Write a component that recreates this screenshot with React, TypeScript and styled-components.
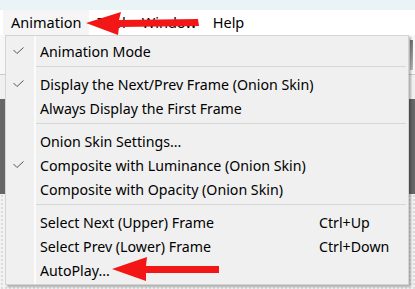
import styled, { createGlobalStyle } from 'styled-components';

const GlobalStyle = createGlobalStyle`
  html, body {
    margin: 0;
    padding: 0;
  }
  body {
    width: 415px;
    height: 289px;
    overflow: hidden;
    background: #f0f0f0;
    font-family: "Noto Sans", "Liberation Sans", sans-serif;
    color: #000;
  }
`;

const StyledWindow = styled.div`
  position: relative;
  width: 415px;
  height: 289px;
  display: flex;
  flex-direction: column;
  overflow: hidden;
`;

const StyledTitleStrip = styled.div`
  flex: none;
  height: 10px;
  background: #eaf3f5;
`;

const StyledMenuBar = styled.div`
  flex: none;
  height: 25px;
  display: flex;
  align-items: stretch;
  padding-left: 3px;
  background: #fff;
`;

const StyledBarItem = styled.div<{ $open?: boolean }>`
  display: flex;
  align-items: center;
  padding: 0 8px 1px;
  font-size: 14.5px;
  background: ${({ $open }) => ($open ? '#f5f5f5' : 'transparent')};
`;

const StyledWorkspace = styled.div`
  flex: 1;
  display: flex;
  flex-direction: column;
`;

const StyledToolbar = styled.div`
  flex: none;
  height: 40px;
  display: flex;
  justify-content: flex-end;
  align-items: flex-start;
  padding-top: 5px;
  box-sizing: border-box;
  background: #f7f7f7;
  border-bottom: 1px solid #c8c8c8;
`;

const StyledGrip = styled.div`
  width: 3px;
  height: 30px;
  margin-right: 2px;
  background: linear-gradient(#777, #bbb);
`;

const StyledGap = styled.div`
  flex: none;
  height: 24px;
  background: #f0f0f0;
`;

const StyledCanvas = styled.div`
  flex: none;
  height: 95px;
  background: #666;
`;

const StyledFloor = styled.div`
  flex: 1;
  background-color: #f2f2f2;
  background-image: radial-gradient(#dcdcdc 1px, transparent 1px);
  background-size: 4px 4px;
`;

const StyledMenu = styled.div`
  position: absolute;
  top: 35px;
  left: 5px;
  width: 404px;
  box-sizing: border-box;
  padding: 3px 2px 2px;
  border: 1px solid #d4d4d4;
  background: linear-gradient(
    to right,
    #f0f0f0 28px,
    #fbfbfb 28px,
    #fbfbfb 30px,
    #f0f0f0 30px
  );
  box-shadow: 2px 2px 2px rgba(0, 0, 0, 0.28);
  font-size: 14.2px;
`;

const StyledRow = styled.div`
  height: 24px;
  display: grid;
  grid-template-columns: 26px 1fr 87px;
  align-items: center;
  white-space: nowrap;
`;

const StyledCheck = styled.div`
  display: flex;
  align-items: center;
  padding: 0 0 2px 5px;
`;

const StyledLabel = styled.span`
  padding-left: 6px;
`;

const StyledSeparator = styled.div`
  height: 1px;
  margin: 3px 0 5px 28px;
  background: #d6d6d6;
`;

const StyledArrows = styled.svg`
  position: absolute;
  inset: 0;
  pointer-events: none;
`;

type Entry =
  | { kind: 'item'; label: string; checked?: boolean; shortcut?: string }
  | { kind: 'sep' };

const ENTRIES: Entry[] = [
  { kind: 'item', label: 'Animation Mode', checked: true },
  { kind: 'sep' },
  { kind: 'item', label: 'Display the Next/Prev Frame (Onion Skin)', checked: true },
  { kind: 'item', label: 'Always Display the First Frame' },
  { kind: 'sep' },
  { kind: 'item', label: 'Onion Skin Settings...' },
  { kind: 'item', label: 'Composite with Luminance (Onion Skin)', checked: true },
  { kind: 'item', label: 'Composite with Opacity (Onion Skin)' },
  { kind: 'sep' },
  { kind: 'item', label: 'Select Next (Upper) Frame', shortcut: 'Ctrl+Up' },
  { kind: 'item', label: 'Select Prev (Lower) Frame', shortcut: 'Ctrl+Down' },
  { kind: 'item', label: 'AutoPlay...' },
];

const CheckMark = () => (
  <svg width="11" height="7" viewBox="0 0 11 7">
    <polyline
      points="0.5,3 4,6.5 10.5,0.5"
      fill="none"
      stroke="#555"
      strokeWidth="1"
    />
  </svg>
);

export default function App() {
  return (
    <StyledWindow>
      <GlobalStyle />
      <StyledTitleStrip />
      <StyledMenuBar>
        <StyledBarItem $open>Animation</StyledBarItem>
        <StyledBarItem>Tool</StyledBarItem>
        <StyledBarItem>Window</StyledBarItem>
        <StyledBarItem>Help</StyledBarItem>
      </StyledMenuBar>
      <StyledWorkspace>
        <StyledToolbar>
          <StyledGrip />
        </StyledToolbar>
        <StyledGap />
        <StyledCanvas />
        <StyledFloor />
      </StyledWorkspace>

      <StyledMenu>
        {ENTRIES.map((entry, i) =>
          entry.kind === 'sep' ? (
            <StyledSeparator key={i} />
          ) : (
            <StyledRow key={i}>
              <StyledCheck>{entry.checked && <CheckMark />}</StyledCheck>
              <StyledLabel>{entry.label}</StyledLabel>
              <span>{entry.shortcut}</span>
            </StyledRow>
          )
        )}
      </StyledMenu>

      {/* red callout arrows drawn over the screenshot */}
      <StyledArrows width="415" height="289" viewBox="0 0 415 289">
        <polygon
          points="86,23 121,12 119,20 198,19 199,26 119,27 118,35"
          fill="#f21616"
        />
        <polygon
          points="112,269 147,257 146,266 219,266 219,273 146,273 146,281"
          fill="#f21616"
        />
      </StyledArrows>
    </StyledWindow>
  );
}
